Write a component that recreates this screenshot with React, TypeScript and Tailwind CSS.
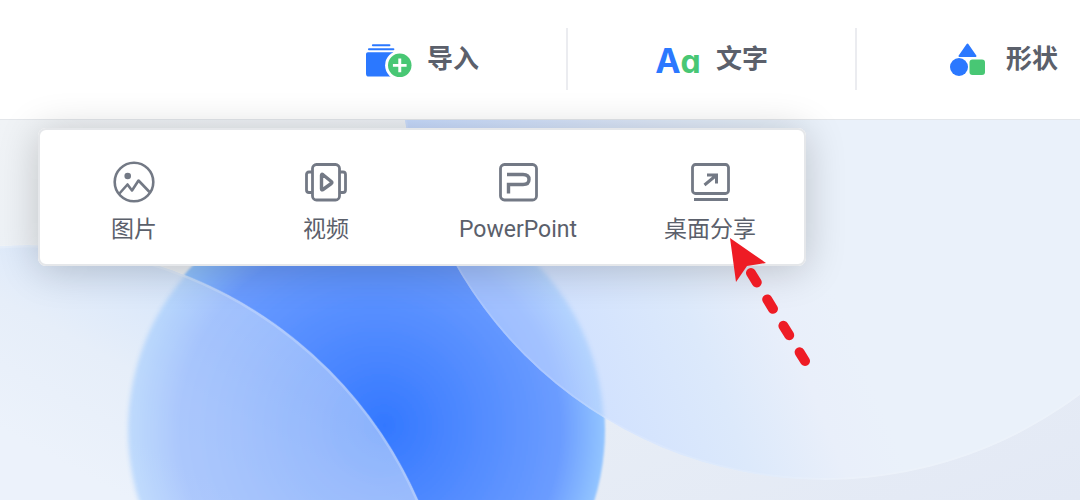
import { ReactNode } from 'react'

interface ToolItem {
  id: string
  label: string
  icon: ReactNode
}

function ImportIcon() {
  return (
    <svg width="47" height="38" viewBox="0 -4 47 38" aria-hidden="true">
      <rect x="6" y="0" width="19" height="2" rx="1" fill="#2b78ff" />
      <rect x="2" y="4" width="27" height="2" rx="1" fill="#2b78ff" />
      <path d="M2 8H28V33H3Q0 33 0 30V10Q0 8 2 8Z" fill="#2b78ff" />
      <circle cx="34.5" cy="21.5" r="15" fill="#fff" />
      <circle cx="34.5" cy="21.5" r="12" fill="#48c774" />
      <path d="M34.5 14.5V28.5M27.5 21.5H41.5" stroke="#fff" strokeWidth="3" />
    </svg>
  )
}

function LetterIcon() {
  return (
    <span
      aria-hidden="true"
      className="flex items-baseline pt-1 font-[Inter,sans-serif] text-[34px]/9 font-bold [font-feature-settings:'cv11']"
    >
      <span className="text-[#2b78ff]">A</span>
      <span className="text-[32px]/9 text-[#48c774]">a</span>
    </span>
  )
}

function ShapeIcon() {
  return (
    <svg width="36" height="34" viewBox="0 0 36 34" aria-hidden="true">
      <path d="M17.5 2.5L25.5 14H9.5Z" fill="#2b78ff" stroke="#2b78ff" strokeWidth="2" strokeLinejoin="round" />
      <circle cx="9" cy="25" r="9" fill="#2b78ff" />
      <rect x="19.5" y="17.5" width="15.5" height="15.5" rx="3" fill="#48c774" />
    </svg>
  )
}

function PictureIcon() {
  return (
    <svg width="42" height="42" viewBox="0 0 42 42" fill="none" stroke="#737985" strokeWidth="2.6" aria-hidden="true">
      <circle cx="21" cy="21" r="19.3" />
      <circle cx="14.7" cy="15" r="3.3" fill="#737985" stroke="none" />
      <path d="M6 33L14.5 23.5L19 29.5L25.5 19.5L36.5 31" strokeLinejoin="round" />
    </svg>
  )
}

function VideoIcon() {
  return (
    <svg width="44" height="42" viewBox="0 0 44 42" fill="none" stroke="#737985" strokeWidth="2.8" aria-hidden="true">
      <rect x="8.5" y="3.5" width="27" height="35.5" rx="4" />
      <path d="M8 11H5Q2.5 11 2.5 13.5V29Q2.5 31.5 5 31.5H8M36 11H39Q41.5 11 41.5 13.5V29Q41.5 31.5 39 31.5H36" />
      <path d="M17.5 14.3V27.9Q17.5 29.5 19 28.5L27.3 22.5Q28.5 21.5 27.3 20.5L19 13.7Q17.5 12.7 17.5 14.3Z" strokeWidth="3.4" strokeLinejoin="round" />
    </svg>
  )
}

function PowerPointIcon() {
  return (
    <svg width="40" height="42" viewBox="0 0 40 42" fill="none" stroke="#737985" strokeWidth="2.8" aria-hidden="true">
      <rect x="2.5" y="3.5" width="36" height="35.5" rx="4" />
      <path d="M9 13.5H25Q31 13.5 31 18.5Q31 23.5 25 23.5H10.5V32.5" strokeWidth="3.4" />
    </svg>
  )
}

function ShareIcon() {
  return (
    <svg width="40" height="42" viewBox="0 0 40 42" fill="none" stroke="#737985" strokeWidth="2.8" aria-hidden="true">
      <rect x="2.5" y="3.5" width="36" height="29" rx="3" />
      <path d="M4 38.5H38" />
      <path d="M14.5 24L26 14.5M17 14H26.5V22.5" strokeWidth="3" />
    </svg>
  )
}

const tools: ToolItem[] = [
  { id: 'import', label: '导入', icon: <ImportIcon /> },
  { id: 'text', label: '文字', icon: <LetterIcon /> },
  { id: 'shape', label: '形状', icon: <ShapeIcon /> },
]

const importOptions: ToolItem[] = [
  { id: 'picture', label: '图片', icon: <PictureIcon /> },
  { id: 'video', label: '视频', icon: <VideoIcon /> },
  { id: 'powerpoint', label: 'PowerPoint', icon: <PowerPointIcon /> },
  { id: 'share', label: '桌面分享', icon: <ShareIcon /> },
]

function Wallpaper() {
  return (
    <svg
      className="absolute inset-0 h-full w-full"
      viewBox="0 120 1080 380"
      preserveAspectRatio="xMinYMin slice"
      aria-hidden="true"
    >
      <defs>
        <linearGradient id="sky" x1="0" y1="0" x2="1" y2="1">
          <stop offset="0" stopColor="#f0f3f6" />
          <stop offset="0.5" stopColor="#e9eff6" />
          <stop offset="1" stopColor="#e3e9f5" />
        </linearGradient>
        <radialGradient id="ball" gradientUnits="userSpaceOnUse" cx="366" cy="430" r="239" fx="385" fy="425">
          <stop offset="0" stopColor="#3378ff" />
          <stop offset="0.3" stopColor="#4a86ff" />
          <stop offset="0.8" stopColor="#6b9cff" />
          <stop offset="1" stopColor="#93c5ff" />
        </radialGradient>
        <linearGradient id="glassRight" gradientUnits="userSpaceOnUse" x1="560" y1="390" x2="830" y2="280">
          <stop offset="0" stopColor="#cfe0ff" />
          <stop offset="0.5" stopColor="#dce9fb" />
          <stop offset="0.8" stopColor="#e9effa" />
          <stop offset="1" stopColor="#eaf1fa" />
        </linearGradient>
        <linearGradient id="glassLeft" gradientUnits="userSpaceOnUse" x1="20" y1="440" x2="130" y2="240">
          <stop offset="0" stopColor="#ecf2fb" />
          <stop offset="0.5" stopColor="#e6eef9" />
          <stop offset="1" stopColor="#d5e5fb" />
        </linearGradient>
        <linearGradient id="topEdge">
          <stop offset="0" stopColor="#c6dafd" />
          <stop offset="0.6" stopColor="#dde8f9" />
          <stop offset="1" stopColor="#e8f0f9" />
        </linearGradient>
        <clipPath id="clipRight">
          <circle cx="825" cy="55" r="425" />
        </clipPath>
        <clipPath id="clipLeft">
          <circle cx="28" cy="671" r="426" />
        </clipPath>
        <filter id="soft">
          <feGaussianBlur stdDeviation="2" />
        </filter>
        <filter id="edge">
          <feGaussianBlur stdDeviation="1" />
        </filter>
      </defs>
      <rect y="120" width="1080" height="380" fill="url(#sky)" />
      <circle cx="366" cy="430" r="239" fill="url(#ball)" filter="url(#edge)" />

      {/* glass discs, each with the ball showing through */}
      <g clipPath="url(#clipRight)">
        <circle cx="825" cy="55" r="425" fill="url(#glassRight)" />
        <circle cx="366" cy="430" r="238" fill="url(#ball)" opacity="0.45" filter="url(#soft)" />
        <rect x="400" y="120" width="410" height="12" fill="url(#topEdge)" />
      </g>
      <g clipPath="url(#clipLeft)">
        <circle cx="28" cy="671" r="426" fill="url(#glassLeft)" />
        <circle cx="366" cy="430" r="238" fill="url(#ball)" opacity="0.48" filter="url(#soft)" />
      </g>
      <circle cx="825" cy="55" r="424" fill="none" stroke="#fff" strokeOpacity="0.12" strokeWidth="2" />
      <circle cx="28" cy="671" r="425" fill="none" stroke="#fff" strokeOpacity="0.2" strokeWidth="3" />
    </svg>
  )
}

function PointerArrow() {
  return (
    <svg
      className="pointer-events-none absolute top-[108px] right-[-6px]"
      width="84"
      height="132"
      viewBox="728 236 84 132"
      aria-hidden="true"
    >
      <path d="M730 238L766 263L747 266L736 282Z" fill="#ee1c25" />
      <path d="M751 273L805 361" stroke="#ee1c25" strokeWidth="10" strokeLinecap="round" strokeDasharray="11 20" />
    </svg>
  )
}

export default function App() {
  return (
    <div className="flex min-h-screen flex-col overflow-hidden bg-white font-[Roboto,'Noto_Sans_CJK_SC',sans-serif] text-[#5b606b]">
      <header className="overflow-hidden border-b border-[#e3e6ea] bg-white pt-7 pb-[29px]">
        <nav className="ml-[279px] flex divide-x-2 divide-[#ebecf0]">
          {tools.map(tool => (
            <button
              key={tool.id}
              type="button"
              className="flex h-[62px] w-[289px] shrink-0 items-center justify-center gap-[15px] text-[26px]/9 font-bold"
            >
              <span className="flex w-[46px] justify-center">{tool.icon}</span>
              <span>{tool.label}</span>
            </button>
          ))}
        </nav>
      </header>

      <main className="relative flex-1 px-[38px] pt-2">
        <Wallpaper />
        <div className="relative w-fit rounded-lg bg-white shadow-[0_4px_40px_rgba(0,0,0,0.2)] ring-2 ring-[#e5e7ea] ring-inset">
          <div className="flex">
            {importOptions.map(option => (
              <button
                key={option.id}
                type="button"
                className="flex w-48 flex-col items-center gap-1.5 pt-[33px] pb-[15px] text-[23px]/[42px]"
              >
                {option.icon}
                <span>{option.label}</span>
              </button>
            ))}
          </div>
          <PointerArrow />
        </div>
      </main>
    </div>
  )
}
